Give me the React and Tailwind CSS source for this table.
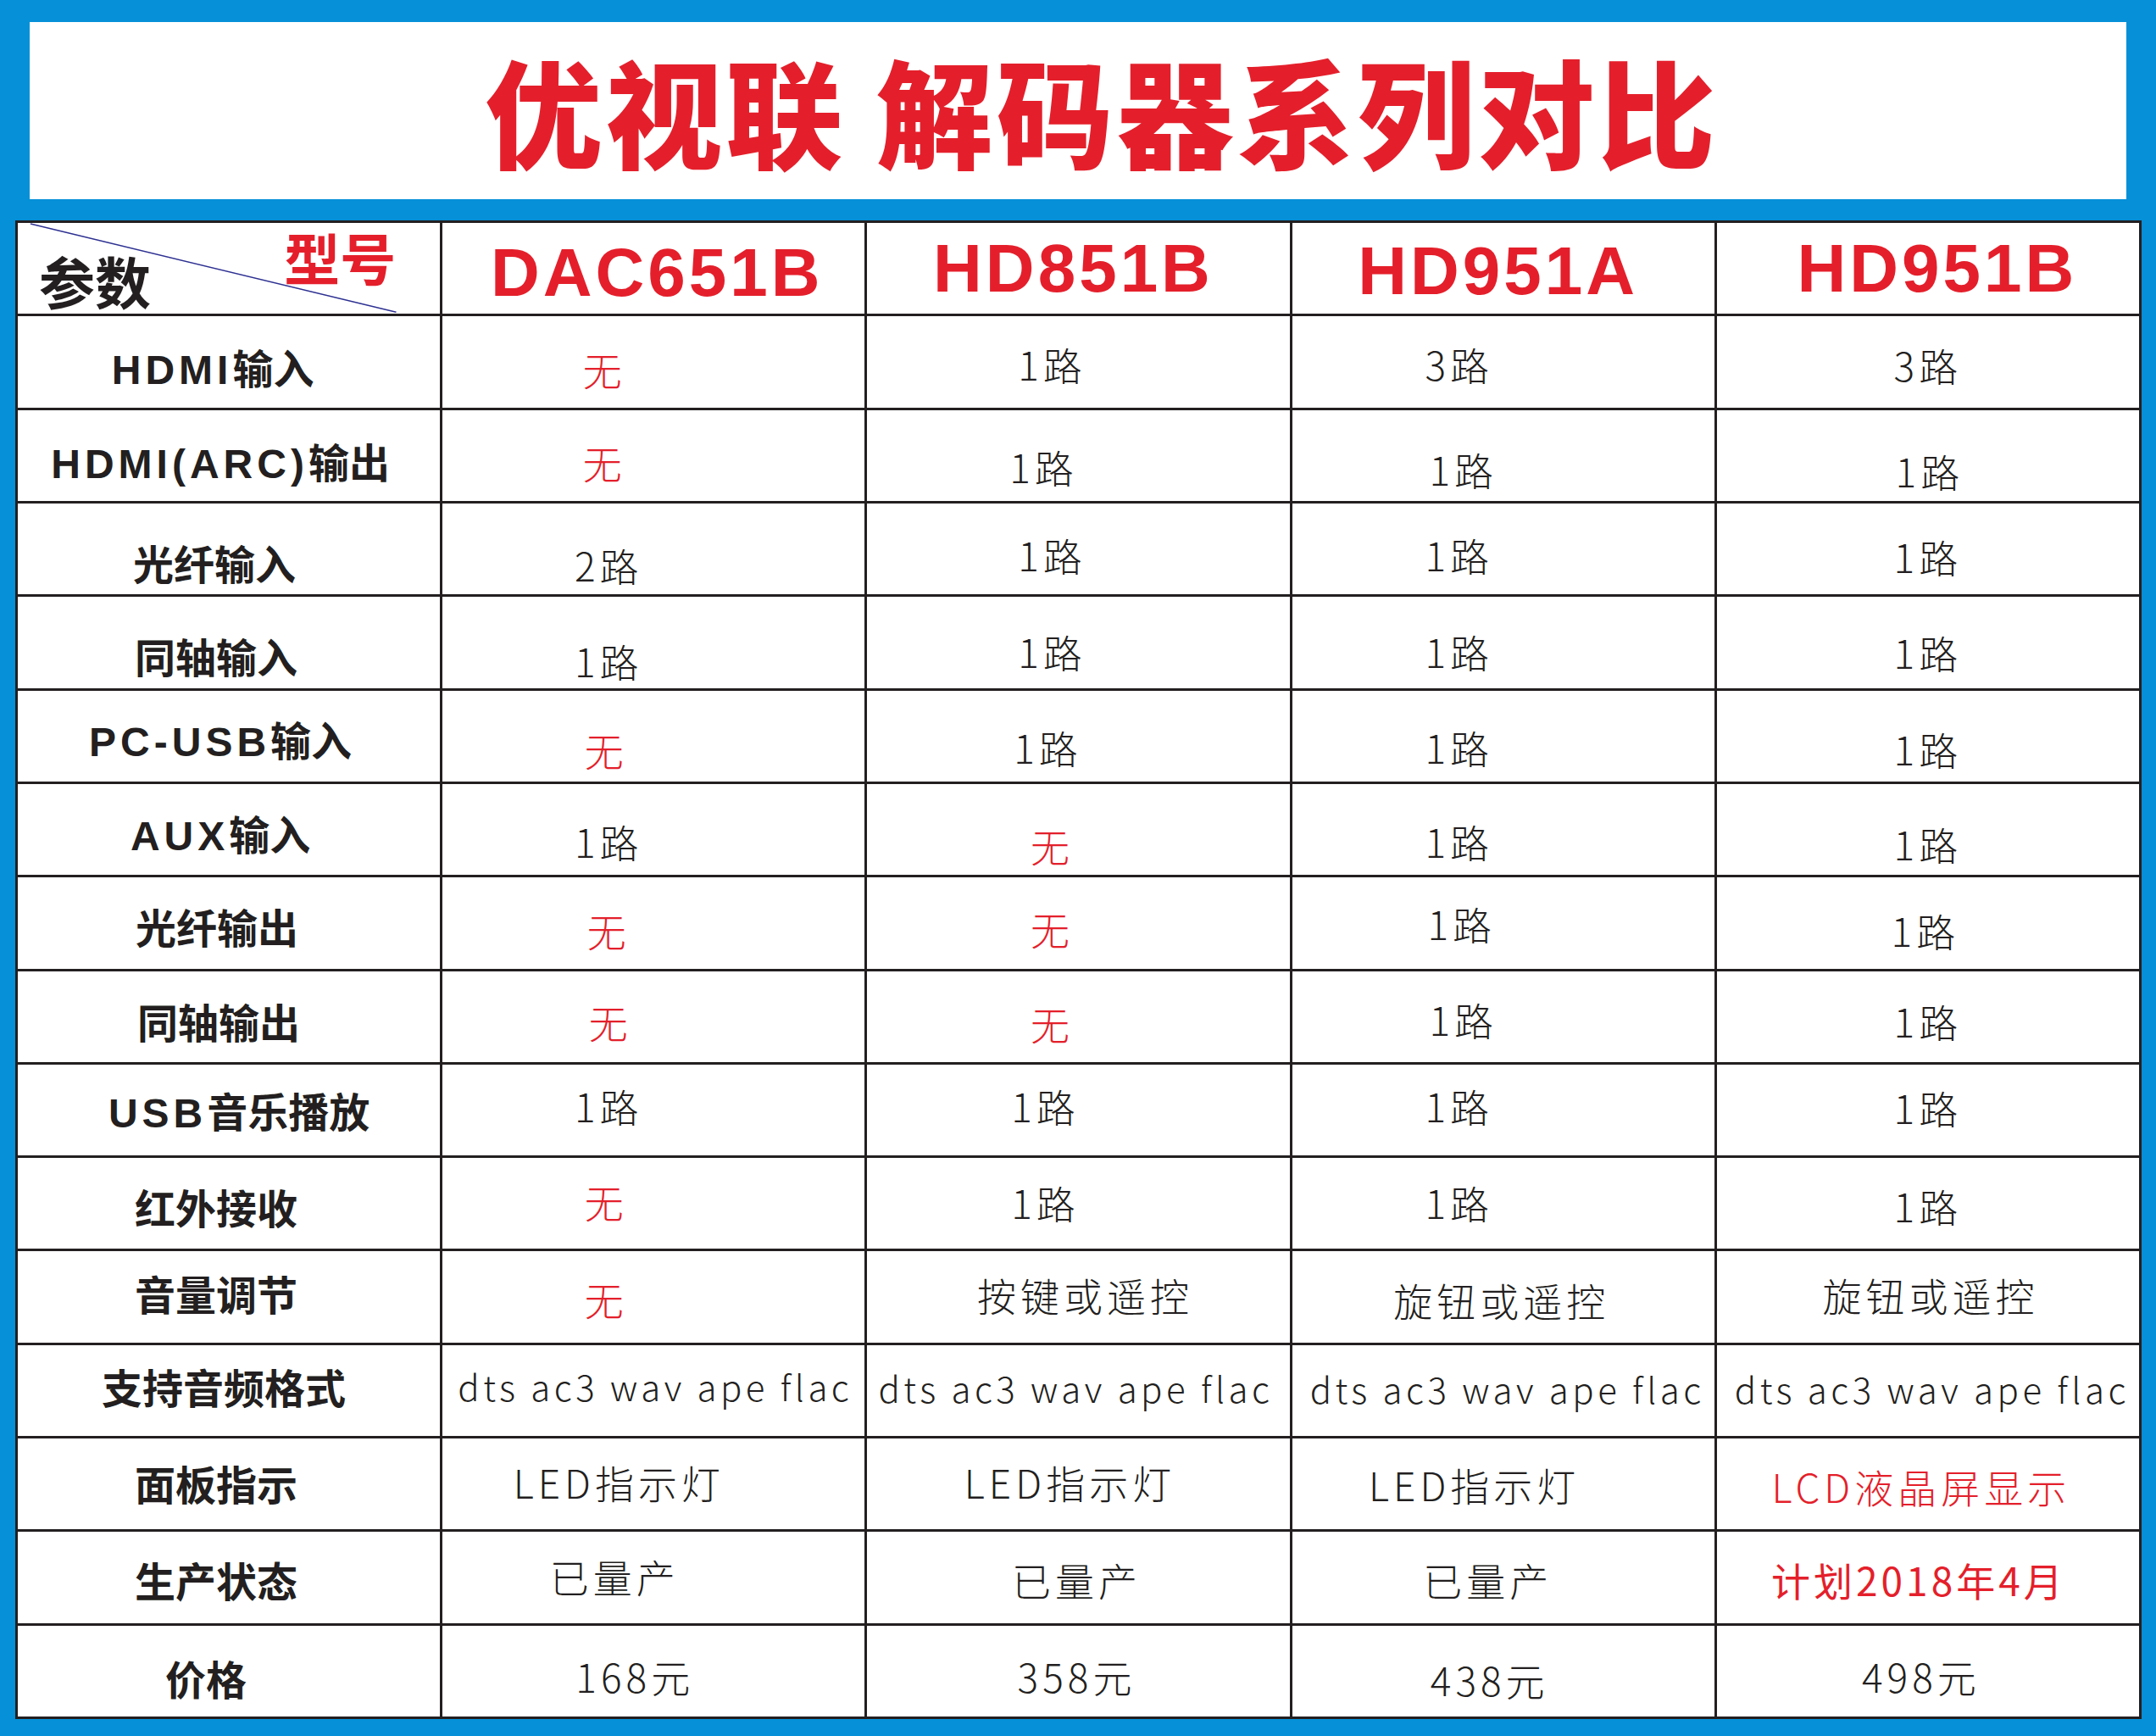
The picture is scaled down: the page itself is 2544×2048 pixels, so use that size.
import React from 'react';

const CJK = "font-['Noto_Sans_CJK_SC',sans-serif]";
const LINE = 'border-[#231f20]';

const MODELS = [
  { name: 'DAC651B', dx: 4, dy: 5 },
  { name: 'HD851B', dx: -6, dy: 0 },
  { name: 'HD951A', dx: -6, dy: 3 },
  { name: 'HD951B', dx: 11, dy: 0 },
];

// [text, dx, dy, flags]  flags: r = red, s = small latin row, n = regular weight
const ROWS = [
  ['HDMI输入', -19, 8, [['无', -58, 8, 'r'], ['1路', -31, 2], ['3路', -52, 2], ['3路', 0, 3]]],
  ['HDMI(ARC)输出', -10, 8, [['无', -58, 8, 'r'], ['1路', -41, 13], ['1路', -47, 16], ['1路', 2, 18]]],
  ['光纤输入', -17, 15, [['2路', -53, 18], ['1路', -31, 6], ['1路', -52, 6], ['1路', 0, 8]]],
  ['同轴输入', -15, 15, [['1路', -53, 21], ['1路', -31, 10], ['1路', -52, 10], ['1路', 0, 11]]],
  ['PC-USB输入', -10, 5, [['无', -56, 16, 'r'], ['1路', -36, 13], ['1路', -52, 13], ['1路', 0, 15]]],
  ['AUX输入', -10, 6, [['1路', -53, 13], ['无', -31, 18, 'r'], ['1路', -52, 13], ['1路', 0, 16]]],
  ['光纤输出', -14, 3, [['无', -53, 8, 'r'], ['无', -31, 6, 'r'], ['1路', -49, 0], ['1路', -3, 8]]],
  ['同轴输出', -12, 5, [['无', -51, 6, 'r'], ['无', -31, 8, 'r'], ['1路', -47, 3], ['1路', 0, 5]]],
  ['USB音乐播放', 12, 2, [['1路', -53, -5], ['1路', -39, -5], ['1路', -52, -5], ['1路', 0, -3]]],
  ['红外接收', -15, 3, [['无', -56, -3, 'r'], ['1路', -39, -2], ['1路', -52, -2], ['1路', 0, 2]]],
  ['音量调节', -15, -5, [['无', -56, 2, 'r'], ['按键或遥控', 8, -3], ['旋钮或遥控', -2, 3], ['旋钮或遥控', 3, -3]]],
  ['支持音频格式', -6, -5, [
    ['dts ac3 wav ape flac', 2, -5, 's'],
    ['dts ac3 wav ape flac', -3, -3, 's'],
    ['dts ac3 wav ape flac', 5, -2, 's'],
    ['dts ac3 wav ape flac', 5, -2, 's'],
  ]],
  ['面板指示', -15, -2, [['LED指示灯', -41, -3], ['LED指示灯', -10, -3], ['LED指示灯', -34, 0], ['LCD液晶屏显示', -8, 2, 'r']]],
  ['生产状态', -15, 2, [['已量产', -46, -2], ['已量产', -2, 2], ['已量产', -18, 2], ['计划2018年4月', -11, 2, 'rn']]],
  ['价格', -27, 8, [['168元', -22, 6], ['358元', -2, 6], ['438元', -16, 10], ['498元', -8, 6]]],
];

function offset(dx, dy) {
  return {
    paddingLeft: Math.max(0, dx * 2),
    paddingRight: Math.max(0, -dx * 2),
    paddingTop: Math.max(0, dy * 2),
    paddingBottom: Math.max(0, -dy * 2),
  };
}

function Cell({ dx = 0, dy = 0, children }) {
  return (
    <div
      className={`flex items-center justify-center border-r-[3px] border-b-[3px] ${LINE} min-w-0`}
      style={offset(dx, dy)}
    >
      {children}
    </div>
  );
}

// latin runs in the labels are set wider, like the print original
function Label({ text }) {
  const parts = text.split(/([\x20-\x7e]+)/).filter(Boolean);
  return (
    <span className={`whitespace-nowrap text-[48px] leading-none font-bold text-[#231f20] ${CJK}`}>
      {parts.map((p, i) =>
        /^[\x20-\x7e]+$/.test(p) ? (
          <span key={i} className="font-['Liberation_Sans','Noto_Sans_CJK_SC',sans-serif] tracking-[5px]">
            {p}
          </span>
        ) : (
          <span key={i}>{p}</span>
        )
      )}
    </span>
  );
}

function Value({ text, flags = '' }) {
  const red = flags.includes('r');
  const small = flags.includes('s');
  const regular = flags.includes('n');
  const cls = [
    'whitespace-nowrap leading-none',
    CJK,
    red ? 'text-[#e41f2b]' : 'text-[#231f20]',
    small ? 'text-[42px] tracking-[4.5px] font-light' : 'text-[46px]',
    !small && (regular ? 'tracking-[4px] font-normal' : 'tracking-[5px] font-light'),
  ]
    .filter(Boolean)
    .join(' ');
  return <span className={cls}>{text}</span>;
}

function HeaderCorner() {
  return (
    <div className={`relative flex justify-between border-r-[3px] border-b-[3px] ${LINE} pt-[6px] pb-[7px] pl-[25px] pr-[52px]`}>
      <svg className="absolute inset-0 h-full w-full" viewBox="0 0 501 110" preserveAspectRatio="none">
        <line x1="15" y1="1" x2="449" y2="108" stroke="#2e3192" strokeWidth="1.6" />
      </svg>
      <span className={`relative self-end text-[66px] leading-none font-bold text-[#231f20] ${CJK}`}>参数</span>
      <span className={`relative self-start text-[66px] leading-none font-bold text-[#e41f2b] ${CJK}`}>型号</span>
    </div>
  );
}

export default function App() {
  return (
    <div className="w-[2544px] h-[2048px] bg-[#0590d8] pt-[26px] overflow-hidden">
      <div className="mx-[35px] h-[209px] bg-white flex items-center justify-center pl-[56px] pb-[6px]">
        <h1 className={`text-[138px] leading-none font-black text-[#e41f2b] tracking-[4px] whitespace-nowrap ${CJK}`}>
          优视联 解码器系列对比
        </h1>
      </div>

      <div
        className={`mt-[25px] ml-[18px] w-[2509px] h-[1768px] grid grid-cols-5 grid-rows-[repeat(16,minmax(0,1fr))] border-l-[3px] border-t-[3px] ${LINE} bg-white`}
      >
        <HeaderCorner />
        {MODELS.map((m) => (
          <Cell key={m.name} dx={m.dx} dy={m.dy}>
            <span className="font-['Liberation_Sans',Arial,sans-serif] font-bold text-[80px] leading-none tracking-[4px] text-[#e41f2b]">
              {m.name}
            </span>
          </Cell>
        ))}

        {ROWS.map(([label, lx, ly, cells]) => (
          <React.Fragment key={label}>
            <Cell dx={lx} dy={ly}>
              <Label text={label} />
            </Cell>
            {cells.map(([text, dx, dy, flags], i) => (
              <Cell key={i} dx={dx} dy={dy}>
                <Value text={text} flags={flags} />
              </Cell>
            ))}
          </React.Fragment>
        ))}
      </div>
    </div>
  );
}
